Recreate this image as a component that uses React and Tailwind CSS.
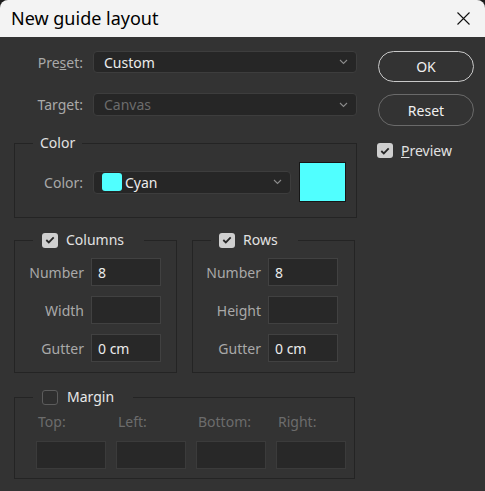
import React from "react";

const font = { fontFamily: '"Noto Sans", "Open Sans", Arial, sans-serif' };

function Chevron() {
  return (
    <svg width="9" height="6" viewBox="0 0 9 6" className="shrink-0">
      <path d="M1 1 L4.5 4.5 L8 1" fill="none" stroke="#8a8a8a" strokeWidth="1.1" />
    </svg>
  );
}

function Check({ checked }) {
  if (!checked) {
    return <span className="w-[16px] h-[15px] rounded-[3px] border border-[#5c5c5c] bg-[#2f2f2f] shrink-0" />;
  }
  return (
    <span className="w-[16px] h-[15px] rounded-[3px] bg-[#cfcfcf] flex items-center justify-center shrink-0">
      <svg width="10" height="8" viewBox="0 0 10 8">
        <path d="M1.3 4 L3.8 6.4 L8.7 1.4" fill="none" stroke="#262626" strokeWidth="1.8" />
      </svg>
    </span>
  );
}

function Select({ children, dim, className }) {
  return (
    <div
      className={
        "flex items-center rounded-[4px] border border-[#3d3d3d] bg-[#262626] pr-[8px] " +
        (dim ? "text-[#6c6c6c] " : "text-[#ececec] ") +
        className
      }
    >
      <div className="flex-1 flex items-center">{children}</div>
      <Chevron />
    </div>
  );
}

function Field({ label, value, labelW }) {
  return (
    <div className="flex items-center">
      <span className={"text-right text-[#a9a9a9] " + labelW}>{label}</span>
      <div className="ml-[7px] w-[70px] h-[28px] border border-[#414141] bg-[#282828] text-[#ececec] flex items-center pl-[6px]">
        {value}
      </div>
    </div>
  );
}

export default function App() {
  return (
    <div className="w-[485px] h-[491px] bg-[#1c1c1c] text-[14px]" style={font}>
      <div className="w-full h-full rounded-t-[8px] overflow-hidden bg-[#333333] flex flex-col">
        <div className="h-[37px] bg-[#f3f3f3] flex items-center justify-between pl-[11px] pr-[15px]">
          <span className="text-[18px] text-black">New guide layout</span>
          <svg width="13" height="13" viewBox="0 0 13 13">
            <path d="M0.5 0.5 L12.5 12.5 M12.5 0.5 L0.5 12.5" stroke="#111" strokeWidth="1.1" />
          </svg>
        </div>

        <div className="flex pl-[14px] pt-[14px]">
          <div className="w-[343px] flex flex-col">
            <div className="flex items-center h-[22px]">
              <span className="w-[69px] text-right text-[#a9a9a9]">
                Pre<span className="underline">s</span>et:
              </span>
              <Select className="ml-[10px] w-[264px] h-[22px] pl-[10px]">Custom</Select>
            </div>
            <div className="flex items-center h-[23px] mt-[20px]">
              <span className="w-[69px] text-right text-[#a9a9a9]">Target:</span>
              <Select dim className="ml-[10px] w-[264px] h-[23px] pl-[10px]">Canvas</Select>
            </div>

            <fieldset className="mt-[17px] border border-[#242424] pb-[15px]">
              <legend className="ml-[18px] px-[7px] h-[20px] leading-[20px] text-[#e2e2e2]">Color</legend>
              <div className="flex items-center mt-[9px]">
                <span className="w-[68px] text-right text-[#a9a9a9]">Color:</span>
                <Select className="ml-[10px] w-[198px] h-[23px] pl-[8px]">
                  <span className="w-[20px] h-[18px] rounded-[3px] bg-[#50ffff] mr-[3px]" />
                  Cyan
                </Select>
                <div className="ml-[8px] w-[47px] h-[40px] bg-[#50ffff] border border-[#161616]" />
              </div>
            </fieldset>

            <div className="flex gap-[15px] mt-[12px]">
              <fieldset className="w-[163px] border border-[#242424] pb-[10px]">
                <legend className="ml-[18px] pl-[9px] pr-[20px] h-[20px] leading-[20px] flex items-center gap-[8px] text-[#e2e2e2]">
                  <Check checked />
                  Columns
                </legend>
                <div className="flex flex-col gap-[10px] mt-[8px]">
                  <Field label="Number" value="8" labelW="w-[69px]" />
                  <Field label="Width" value="" labelW="w-[69px]" />
                  <Field label="Gutter" value="0 cm" labelW="w-[69px]" />
                </div>
              </fieldset>
              <fieldset className="w-[163px] border border-[#242424] pb-[10px]">
                <legend className="ml-[18px] pl-[8px] pr-[20px] h-[20px] leading-[20px] flex items-center gap-[8px] text-[#e2e2e2]">
                  <Check checked />
                  Rows
                </legend>
                <div className="flex flex-col gap-[10px] mt-[8px]">
                  <Field label="Number" value="8" labelW="w-[68px]" />
                  <Field label="Height" value="" labelW="w-[68px]" />
                  <Field label="Gutter" value="0 cm" labelW="w-[68px]" />
                </div>
              </fieldset>
            </div>

            <fieldset className="w-[341px] mt-[14px] border border-[#242424] pb-[9px] pl-[21px]">
              <legend className="ml-[-3px] pl-[9px] pr-[19px] h-[20px] leading-[20px] flex items-center gap-[9px] text-[#e8e8e8]">
                <Check />
                Margin
              </legend>
              <div className="grid grid-cols-[70px_70px_70px_70px] gap-x-[10px] text-[#6c6c6c]">
                <span className="pl-[2px] mt-[5px] leading-[20px]">Top:</span>
                <span className="pl-[2px] mt-[5px] leading-[20px]">Left:</span>
                <span className="pl-[2px] mt-[5px] leading-[20px]">Bottom:</span>
                <span className="pl-[2px] mt-[5px] leading-[20px]">Right:</span>
                {[0, 1, 2, 3].map((i) => (
                  <div key={i} className="mt-[9px] h-[28px] border border-[#3b3b3b] bg-[#282828]" />
                ))}
              </div>
            </fieldset>
          </div>

          <div className="ml-[21px] w-[96px] flex flex-col">
            <button className="h-[31px] rounded-full border-[1.5px] border-[#c9c9c9] text-[#f0f0f0]">OK</button>
            <button className="mt-[12px] h-[32px] rounded-full border border-[#6a6a6a] text-[#f0f0f0]">Reset</button>
            <div className="mt-[14px] -ml-[1px] flex items-center gap-[8px] text-[#e2e2e2]">
              <Check checked />
              <span>
                <span className="underline">P</span>review
              </span>
            </div>
          </div>
        </div>
      </div>
    </div>
  );
}
